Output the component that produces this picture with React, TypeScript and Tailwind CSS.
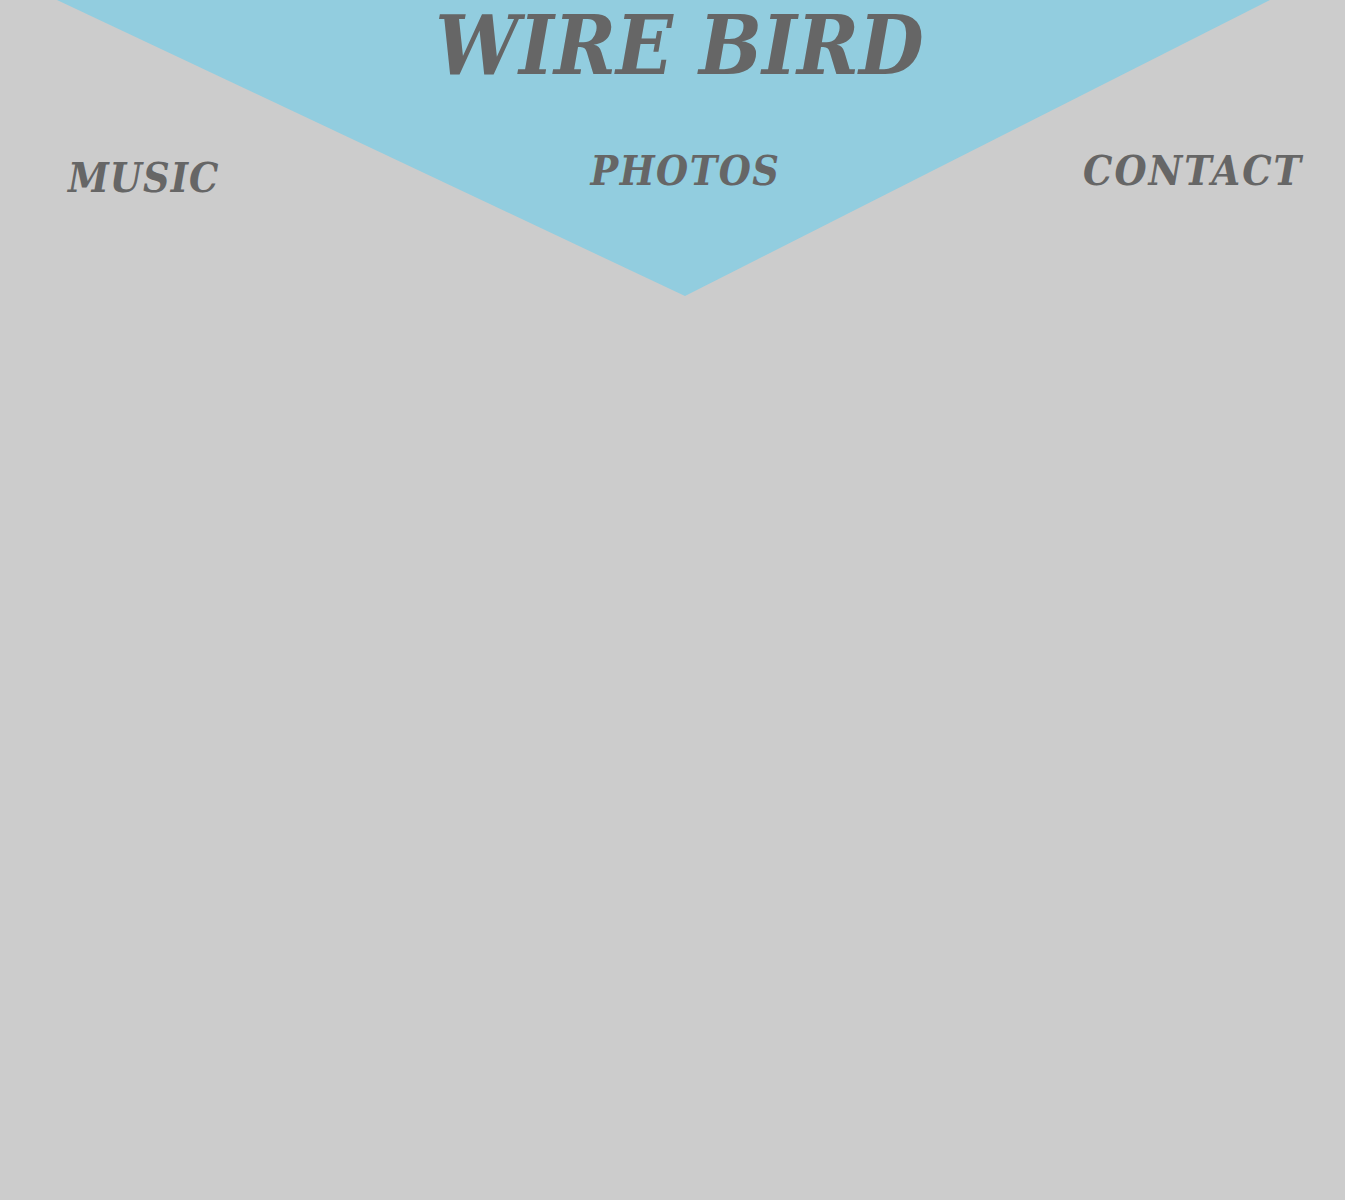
export default function App() {
  return (
    <div className="min-h-[1200px] bg-[#cccccc] text-[#666666]" style={{ fontFamily: '"DejaVu Serif Condensed", "DejaVu Serif", serif' }}>
      <header className="relative h-[300px]">
        {/* Triangle backdrop */}
        <svg className="absolute inset-0" width="1345" height="300" viewBox="0 0 1345 300">
          <polygon points="57,0 1270,0 685,296" fill="#92cddf" />
        </svg>
        <div className="relative flex flex-col">
          <h1 className="text-center pl-[14px] text-[83px] font-bold italic leading-[1.1]">WIRE BIRD</h1>
          <nav className="grid grid-cols-3 items-start pl-[68px] pr-[42px] mt-[60px]">
            <a href="#" className="justify-self-start mt-[7px] text-[41px] font-bold italic tracking-[1px] leading-none">MUSIC</a>
            <a href="#" className="justify-self-center text-[41px] font-bold italic tracking-[1.5px] leading-none">PHOTOS</a>
            <a href="#" className="justify-self-end text-[41px] font-bold italic tracking-[2px] leading-none">CONTACT</a>
          </nav>
        </div>
      </header>
    </div>
  );
}
